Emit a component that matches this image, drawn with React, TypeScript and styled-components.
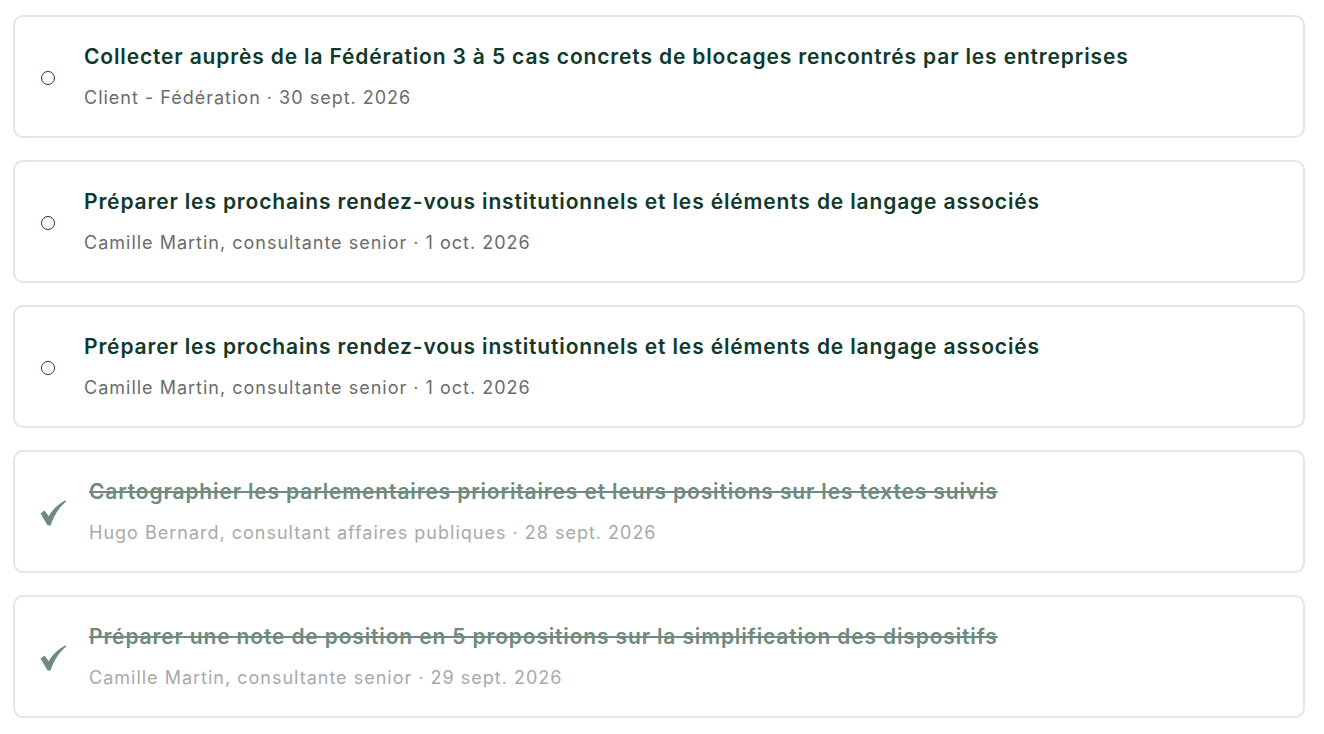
import styled, { createGlobalStyle } from 'styled-components';

type Task = {
  title: string;
  owner: string;
  due: string;
  done: boolean;
};

const tasks: Task[] = [
  {
    title:
      'Collecter auprès de la Fédération 3 à 5 cas concrets de blocages rencontrés par les entreprises',
    owner: 'Client - Fédération',
    due: '30 sept. 2026',
    done: false,
  },
  {
    title:
      'Préparer les prochains rendez-vous institutionnels et les éléments de langage associés',
    owner: 'Camille Martin, consultante senior',
    due: '1 oct. 2026',
    done: false,
  },
  {
    title:
      'Préparer les prochains rendez-vous institutionnels et les éléments de langage associés',
    owner: 'Camille Martin, consultante senior',
    due: '1 oct. 2026',
    done: false,
  },
  {
    title:
      'Cartographier les parlementaires prioritaires et leurs positions sur les textes suivis',
    owner: 'Hugo Bernard, consultant affaires publiques',
    due: '28 sept. 2026',
    done: true,
  },
  {
    title:
      'Préparer une note de position en 5 propositions sur la simplification des dispositifs',
    owner: 'Camille Martin, consultante senior',
    due: '29 sept. 2026',
    done: true,
  },
];

const GlobalStyle = createGlobalStyle`
  body {
    margin: 0;
    background: #ffffff;
    font-family: Inter, 'Noto Sans', sans-serif;
  }
`;

// calligraphic tick: thick short arm, long tapering arm
const Tick = () => (
  <CheckMark viewBox="0 0 26 26" aria-hidden>
    <path d="M0.5 13.5 L4.5 10.5 L8.8 16.2 C12.5 9.5 18.5 3.5 26 0.3 L26 1.8 C19.5 7 14 15 10.6 25.5 L7.6 25.5 Z" />
  </CheckMark>
);

const App = () => (
  <>
    <GlobalStyle />
    <TaskList>
      {tasks.map((task, i) => (
        <TaskCard key={i}>
          {task.done ? <Tick /> : <OpenMark />}
          <TaskBody>
            <TaskTitle done={task.done}>{task.title}</TaskTitle>
            <TaskMeta done={task.done}>
              {task.owner} · {task.due}
            </TaskMeta>
          </TaskBody>
        </TaskCard>
      ))}
    </TaskList>
  </>
);

const TaskList = styled.div`
  display: flex;
  flex-direction: column;
  gap: 22px;
  padding: 15px 19px 0 13px;
`;

const TaskCard = styled.div`
  display: flex;
  align-items: center;
  height: 123px;
  box-sizing: border-box;
  padding: 0 26px;
  border: 2px solid #e3e6e5;
  border-radius: 10px;
  background: #fff;
`;

const OpenMark = styled.span`
  flex: none;
  width: 14px;
  height: 14px;
  margin: 3px 29px 0 0;
  box-sizing: border-box;
  border: 1.5px solid #163d2f;
  border-radius: 50%;
`;

const CheckMark = styled.svg`
  flex: none;
  width: 26px;
  height: 26px;
  margin: 3px 23px 0 -1px;
  fill: #6f8a7f;
`;

const TaskBody = styled.div`
  display: flex;
  flex-direction: column;
  gap: 14px;
`;

const TaskTitle = styled.div<{ done: boolean }>`
  font-size: 21px;
  font-weight: 600;
  line-height: 28px;
  letter-spacing: 0.85px;
  color: ${({ done }) => (done ? '#6f8a7f' : '#0f3a2b')};
  text-decoration: ${({ done }) => (done ? 'line-through' : 'none')};
`;

const TaskMeta = styled.div<{ done: boolean }>`
  font-size: 18px;
  line-height: 26px;
  letter-spacing: 1px;
  color: ${({ done }) => (done ? '#a7aaa9' : '#6a6c6b')};
`;

export default App;
